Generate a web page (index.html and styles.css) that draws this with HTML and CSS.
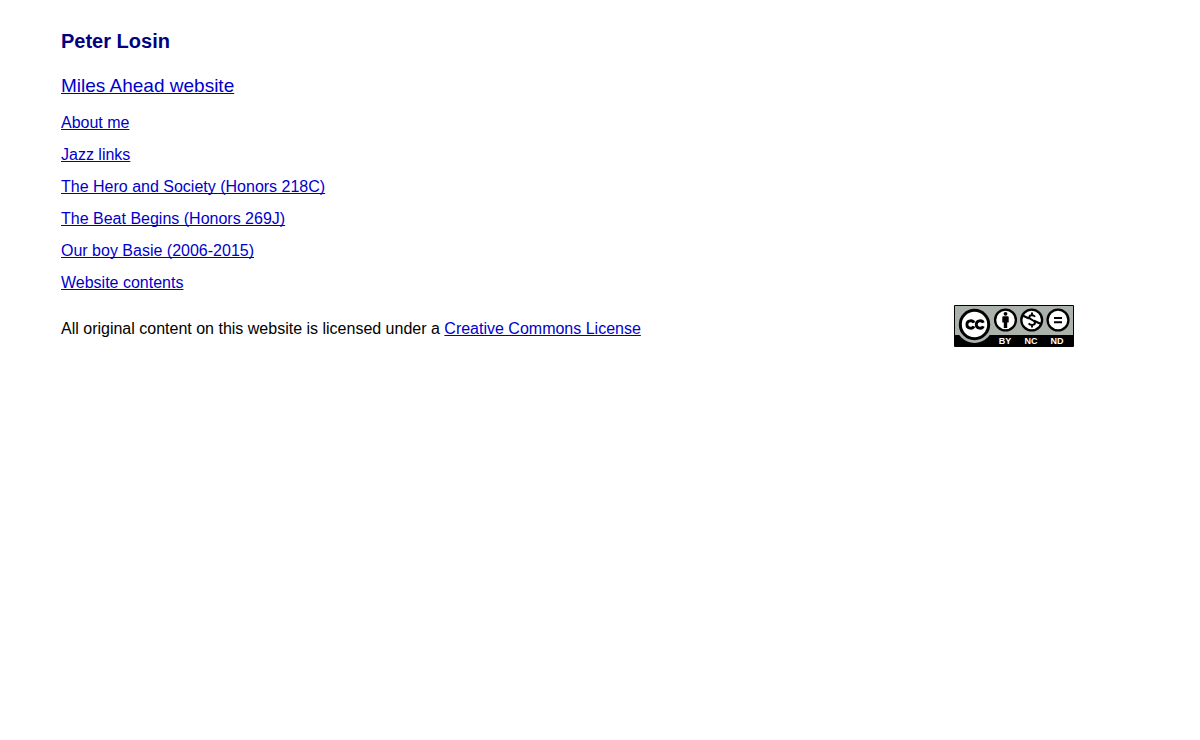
FILE: index.html
```html
<!DOCTYPE html>
<html lang="en">
<head>
<meta charset="utf-8">
<meta name="viewport" content="width=device-width, initial-scale=1">
<title>Peter Losin</title>
<link rel="stylesheet" href="styles.css">
</head>
<body>
<main class="page">
  <h1 class="title">Peter Losin</h1>
  <nav class="links">
    <a class="featured" href="#miles">Miles Ahead website</a>
    <a href="#about">About me</a>
    <a href="#jazz">Jazz links</a>
    <a href="#hero">The Hero and Society (Honors 218C)</a>
    <a href="#beat">The Beat Begins (Honors 269J)</a>
    <a href="#basie">Our boy Basie (2006-2015)</a>
    <a href="#contents">Website contents</a>
  </nav>
  <footer class="license">
    <p class="license-text">All original content on this website is licensed under a <a href="#license">Creative Commons License</a></p>
    <a class="badge" href="#license" aria-label="Creative Commons License">
      <svg width="120" height="42" viewBox="0 0 120 42" aria-hidden="true">
        <rect width="120" height="42" rx="1" fill="#000"/>
        <rect x="1" y="1" width="118" height="29" fill="#aab2ab"/>
        <circle cx="20.500" cy="19.500" r="18.500" fill="#aab2ab"/>
        <circle cx="20.500" cy="19.500" r="14.200" fill="#fff" stroke="#000" stroke-width="3"/>
        <g fill="none" stroke="#000" stroke-width="2.800">
          <path d="M19.900 17.700C18.900 15 12.900 14.800 12.900 19.500C12.900 24.200 18.900 24 19.900 21.300"/>
          <path d="M29.300 17.700C28.300 15 22.300 14.800 22.300 19.500C22.300 24.200 28.300 24 29.300 21.300"/>
        </g>
        <g fill="#fff" stroke="#000" stroke-width="2.300">
          <circle cx="51.500" cy="15" r="10.400"/>
          <circle cx="77.700" cy="15" r="10.400"/>
          <circle cx="104" cy="15" r="10.400"/>
        </g>
        <circle cx="51.500" cy="8.800" r="1.900"/>
        <path d="M49.300 11.300h4.400q1 0 1 1v5.200h-1.500v5.500h-3.400v-5.500h-1.500v-5.200q0-1 1-1z"/>
        <path d="M68 10.200l7 3.300M80 15.800l7.500 3.500" stroke="#000" stroke-width="2.200"/>
        <path d="M81 11.700C79.500 9.500 75.300 9.800 75.300 12.200C75.300 15 81 14.800 81 17.800C81 20.500 76.300 20.400 74.600 18.300M78 7.500v2.600M78 19.800v2.600" fill="none" stroke="#000" stroke-width="1.900"/>
        <path d="M100 13h8M100 17.200h8" stroke="#000" stroke-width="2"/>
        <g class="badge-text" fill="#fff" text-anchor="middle">
          <text x="51" y="39">BY</text>
          <text x="77" y="39">NC</text>
          <text x="103" y="39">ND</text>
        </g>
      </svg>
    </a>
  </footer>
</main>
</body>
</html>
```
FILE: styles.css
```css
body {
  margin: 0;
  background: #fff;
  color: #000;
  font: 16px/20px "Liberation Sans", Arial, sans-serif;
}
a {
  color: #0000cc;
  text-decoration-skip-ink: none;
}
.page {
  padding: 29px 126px 29px 61px;
}
.title {
  margin: 0 0 21px;
  color: #000080;
  font-size: 20px;
  line-height: 24px;
}
.links {
  display: flex;
  flex-direction: column;
  align-items: flex-start;
  gap: 12px;
}
.featured {
  margin-bottom: 3px;
  font-size: 19px;
  line-height: 24px;
}
.license {
  display: flex;
  align-items: center;
  justify-content: space-between;
  gap: 20px;
  margin-top: 12px;
}
.license-text {
  margin: 0;
  padding-top: 6px;
}
.badge {
  flex: none;
}
.badge svg {
  display: block;
}
.badge-text {
  font-size: 9px;
  font-weight: bold;
}
```
